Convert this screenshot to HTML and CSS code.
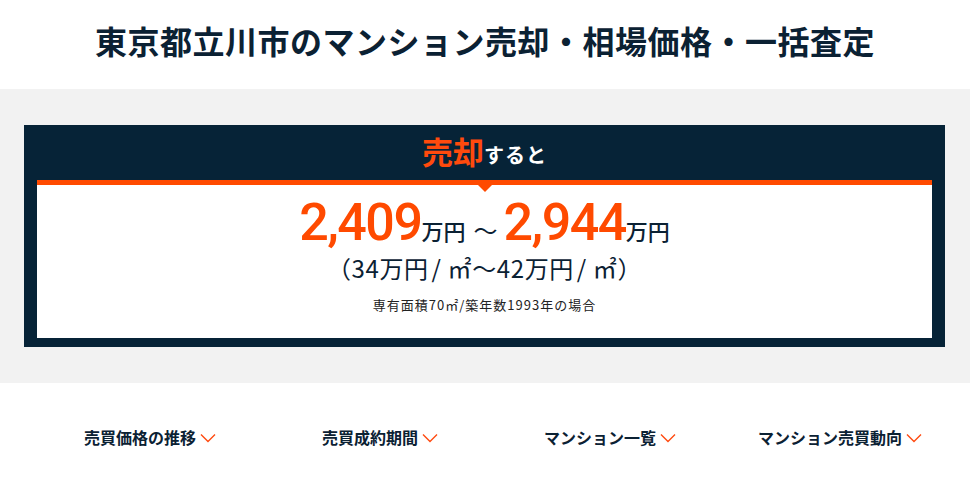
FILE: index.html
```html
<!DOCTYPE html>
<html lang="ja">
<head>
<meta charset="utf-8">
<link rel="stylesheet" href="styles.css">
</head>
<body>
<h1 class="title">東京都立川市のマンション売却・相場価格・一括査定</h1>
<section class="band">
  <div class="box">
    <div class="box-head"><span class="hl">売却</span><span class="head-rest">すると</span></div>
    <div class="box-body">
      <div class="price"><span class="num">2,409</span><span class="unit">万円</span><span class="tilde">～</span><span class="num">2,944</span><span class="unit">万円</span></div>
      <div class="per">（34万円<span class="sl">/</span>㎡～42万円<span class="sl">/</span>㎡）</div>
      <div class="note">専有面積70㎡/築年数1993年の場合</div>
    </div>
  </div>
</section>
<nav class="tabs">
  <a class="tab">売買価格の推移<svg class="chev" viewBox="0 0 16 10" width="16" height="10"><path d="M1 1.5 L8 8.5 L15 1.5" fill="none" stroke="#ff4a10" stroke-width="1.4"/></svg></a>
  <a class="tab">売買成約期間<svg class="chev" viewBox="0 0 16 10" width="16" height="10"><path d="M1 1.5 L8 8.5 L15 1.5" fill="none" stroke="#ff4a10" stroke-width="1.4"/></svg></a>
  <a class="tab">マンション一覧<svg class="chev" viewBox="0 0 16 10" width="16" height="10"><path d="M1 1.5 L8 8.5 L15 1.5" fill="none" stroke="#ff4a10" stroke-width="1.4"/></svg></a>
  <a class="tab">マンション売買動向<svg class="chev" viewBox="0 0 16 10" width="16" height="10"><path d="M1 1.5 L8 8.5 L15 1.5" fill="none" stroke="#ff4a10" stroke-width="1.4"/></svg></a>
</nav>
</body>
</html>
```
FILE: styles.css
```css
* { box-sizing: border-box; }
html, body { margin: 0; padding: 0; background: #fff; }
body {
  font-family: "Noto Sans CJK JP", "Noto Sans", sans-serif;
  color: #0b2133;
  width: 970px;
}
.title {
  margin: 0;
  height: 89px;
  display: flex;
  align-items: center;
  justify-content: center;
  font-size: 32px;
  font-weight: 700;
  letter-spacing: 0.5px;
  padding-bottom: 10px;
}
.band {
  background: #f2f2f2;
  height: 294px;
  padding-top: 36px;
}
.box {
  width: 921px;
  margin: 0 auto 0 24px;
  background: #062337;
  padding: 0 13px 9px;
}
.box-head {
  height: 55px;
  display: flex;
  align-items: center;
  justify-content: center;
  padding-bottom: 4px;
}
.hl {
  color: #ff4a0d;
  font-size: 31px;
  font-weight: 700;
}
.head-rest {
  color: #fff;
  font-size: 20px;
  font-weight: 700;
  margin-top: 8px;
  letter-spacing: 1px;
}
.box-body {
  position: relative;
  background: #fff;
  border-top: 5px solid #ff4a00;
  height: 158px;
  text-align: center;
  padding-top: 10px;
}
.box-body::before {
  content: "";
  position: absolute;
  top: 0;
  left: 441px;
  border-left: 7px solid transparent;
  border-right: 7px solid transparent;
  border-top: 7px solid #ff4a00;
}
.price {
  display: flex;
  align-items: baseline;
  justify-content: center;
  height: 56px;
  line-height: 56px;
}
.num {
  font-family: Roboto, "Liberation Sans", sans-serif;
  font-weight: 500;
  font-size: 52px;
  color: #ff4a00;
  letter-spacing: -1.5px;
}
.unit {
  font-size: 22px;
  color: #0b2133;
  font-weight: 500;
}
.tilde {
  font-size: 24px;
  margin: 0 6px 0 8px;
  color: #0b2133;
}
.per {
  font-size: 24px;
  line-height: 34px;
  margin-top: 0;
  color: #0b2133;
  letter-spacing: 0.6px;
}
.sl {
  margin: 0 6px 0 3px;
}
.note {
  font-size: 13px;
  line-height: 18px;
  margin-top: 11px;
  letter-spacing: 1px;
  color: #222;
}
.tabs {
  display: grid;
  grid-template-columns: repeat(4, 230px);
  margin-left: 35px;
  height: 98px;
  align-items: center;
  padding-top: 10px;
}
.tab {
  display: flex;
  align-items: center;
  justify-content: center;
  gap: 4px;
  font-size: 16px;
  font-weight: 700;
  color: #0b2133;
}
.chev { margin-top: 2px; }
```
